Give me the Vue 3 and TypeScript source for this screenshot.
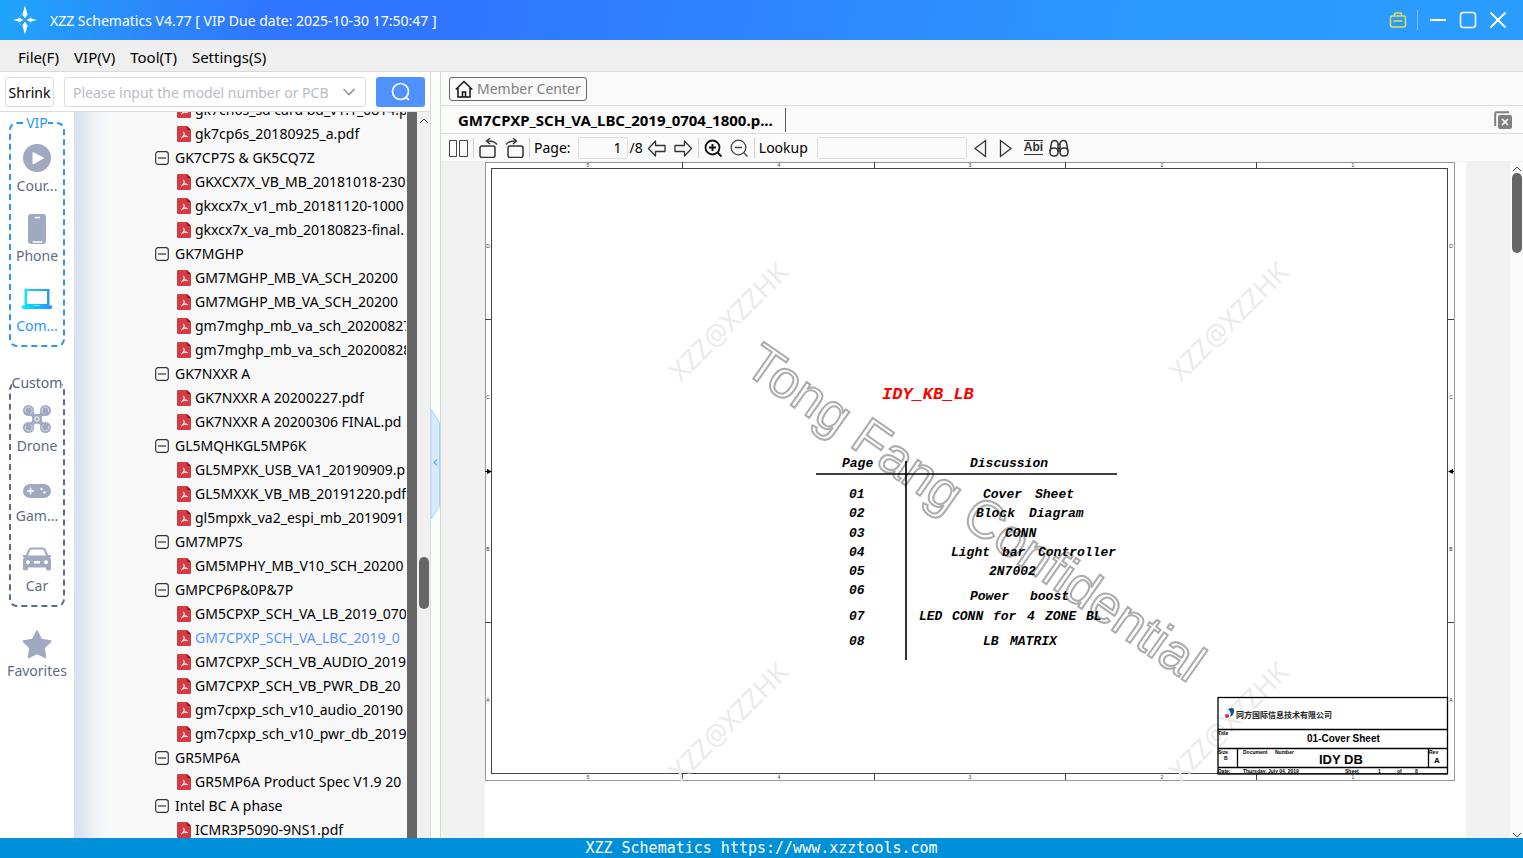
<script setup lang="ts">
import { ref } from 'vue'

interface NavItem {
  label: string
  icon: string
  active?: boolean
}

interface TreeRow {
  name: string
  group?: boolean
  active?: boolean
}

interface Word {
  x: number
  y: number
  text: string
}

const menus = ['File(F)', 'VIP(V)', 'Tool(T)', 'Settings(S)']

const vipItems: NavItem[] = [
  { label: 'Cour...', icon: 'play' },
  { label: 'Phone', icon: 'phone' },
  { label: 'Com...', icon: 'laptop', active: true },
]

const customItems: NavItem[] = [
  { label: 'Drone', icon: 'drone' },
  { label: 'Gam...', icon: 'game' },
  { label: 'Car', icon: 'car' },
]

const sections = [
  { title: 'VIP', cls: 'vip', items: vipItems },
  { title: 'Custom', cls: 'custom', items: customItems },
]

const rows: TreeRow[] = [
  { name: 'gk7cn6s_sd card bd_v1.1_0814.p' },
  { name: 'gk7cp6s_20180925_a.pdf' },
  { name: 'GK7CP7S & GK5CQ7Z', group: true },
  { name: 'GKXCX7X_VB_MB_20181018-230' },
  { name: 'gkxcx7x_v1_mb_20181120-1000' },
  { name: 'gkxcx7x_va_mb_20180823-final.' },
  { name: 'GK7MGHP', group: true },
  { name: 'GM7MGHP_MB_VA_SCH_20200' },
  { name: 'GM7MGHP_MB_VA_SCH_20200' },
  { name: 'gm7mghp_mb_va_sch_20200827' },
  { name: 'gm7mghp_mb_va_sch_20200828' },
  { name: 'GK7NXXR A', group: true },
  { name: 'GK7NXXR A 20200227.pdf' },
  { name: 'GK7NXXR A 20200306 FINAL.pd' },
  { name: 'GL5MQHKGL5MP6K', group: true },
  { name: 'GL5MPXK_USB_VA1_20190909.p' },
  { name: 'GL5MXXK_VB_MB_20191220.pdf' },
  { name: 'gl5mpxk_va2_espi_mb_2019091' },
  { name: 'GM7MP7S', group: true },
  { name: 'GM5MPHY_MB_V10_SCH_20200' },
  { name: 'GMPCP6P&0P&7P', group: true },
  { name: 'GM5CPXP_SCH_VA_LB_2019_070' },
  { name: 'GM7CPXP_SCH_VA_LBC_2019_0', active: true },
  { name: 'GM7CPXP_SCH_VB_AUDIO_2019' },
  { name: 'GM7CPXP_SCH_VB_PWR_DB_20' },
  { name: 'gm7cpxp_sch_v10_audio_20190' },
  { name: 'gm7cpxp_sch_v10_pwr_db_2019' },
  { name: 'GR5MP6A', group: true },
  { name: 'GR5MP6A Product Spec V1.9 20' },
  { name: 'Intel BC A phase', group: true },
  { name: 'ICMR3P5090-9NS1.pdf' },
]

const words: Word[] = [
  { x: 357, y: 305, text: 'Page' },
  { x: 485, y: 305, text: 'Discussion' },
  { x: 364, y: 336, text: '01' },
  { x: 364, y: 355, text: '02' },
  { x: 364, y: 375, text: '03' },
  { x: 364, y: 394, text: '04' },
  { x: 364, y: 413, text: '05' },
  { x: 364, y: 432, text: '06' },
  { x: 364, y: 458, text: '07' },
  { x: 364, y: 483, text: '08' },
  { x: 498, y: 336, text: 'Cover' },
  { x: 550, y: 336, text: 'Sheet' },
  { x: 491, y: 355, text: 'Block' },
  { x: 544, y: 355, text: 'Diagram' },
  { x: 520, y: 375, text: 'CONN' },
  { x: 466, y: 394, text: 'Light' },
  { x: 517, y: 394, text: 'bar' },
  { x: 553, y: 394, text: 'Controller' },
  { x: 504, y: 413, text: '2N7002' },
  { x: 485, y: 438, text: 'Power' },
  { x: 545, y: 438, text: 'boost' },
  { x: 434, y: 458, text: 'LED' },
  { x: 467, y: 458, text: 'CONN' },
  { x: 508, y: 458, text: 'for' },
  { x: 542, y: 458, text: '4' },
  { x: 560, y: 458, text: 'ZONE' },
  { x: 601, y: 458, text: 'BL' },
  { x: 498, y: 483, text: 'LB' },
  { x: 525, y: 483, text: 'MATRIX' },
]

const marks = [
  { x: 196, y: 221 },
  { x: 696, y: 221 },
  { x: 196, y: 621 },
  { x: 696, y: 621 },
]

const columnTicks = [197, 389, 580, 771]
const columnLabels = [
  { x: 103, text: '5' },
  { x: 294, text: '4' },
  { x: 485, text: '3' },
  { x: 677, text: '2' },
  { x: 868, text: '1' },
]
const rowTicks = [157, 460]
const rowLabels = [
  { y: 86, text: 'D' },
  { y: 237, text: 'C' },
  { y: 389, text: 'B' },
  { y: 540, text: 'A' },
]

const keyword = ref('')
const lookup = ref('')
const page = ref('1')
</script>

<template>
  <div class="app">
    <header class="titlebar">
      <svg class="logo" viewBox="0 0 24 30" aria-hidden="true">
        <circle cx="12" cy="15" r="6.500" fill="none" stroke="#7cc6ff" stroke-width="1" stroke-dasharray="5 2" />
        <path d="M12 0.500l2.600 9L12 13.500l-2.600-4zM12 29.500l2.600-9L12 16.500l-2.600 4zM0 15l7-1.800 3.500 1.800L7 16.800zM24 15l-7-1.800-3.500 1.800 3.500 1.800z" fill="#fff" />
      </svg>
      <h1>XZZ Schematics V4.77 [ VIP Due date: 2025-10-30 17:50:47 ]</h1>
      <button class="win bag" type="button" aria-label="Toolbox">
        <svg viewBox="0 0 18 18"><path d="M5.500 4.500V3.500q0-1.500 1.500-1.500h4q1.500 0 1.500 1.500v1M3 5h12q1.500 0 1.500 1.500V14q0 2-2 2h-11q-2 0-2-2V6.500Q1.500 5 3 5zM5 10h8" fill="none" stroke="#e3e04a" stroke-width="1.500" stroke-linecap="round" /></svg>
      </button>
      <span class="win-sep"></span>
      <button class="win" type="button" aria-label="Minimize">
        <svg viewBox="0 0 18 18"><path d="M1 9h16" stroke="#fff" stroke-width="2" /></svg>
      </button>
      <button class="win" type="button" aria-label="Maximize">
        <svg viewBox="0 0 18 18"><rect x="1.500" y="1.500" width="15" height="15" rx="3" fill="none" stroke="#fff" stroke-width="1.500" /></svg>
      </button>
      <button class="win" type="button" aria-label="Close">
        <svg viewBox="0 0 18 18"><path d="M1.500 1.500l15 15M16.500 1.500l-15 15" stroke="#fff" stroke-width="1.800" /></svg>
      </button>
    </header>

    <nav class="menubar">
      <button v-for="m in menus" :key="m" type="button">{{ m }}</button>
    </nav>

    <main class="body">
      <section class="left">
        <form class="search" @submit.prevent>
          <button class="shrink" type="button">Shrink</button>
          <div class="combo">
            <input v-model="keyword" type="text" aria-label="Model number" placeholder="Please input the model number or PCB" />
            <svg viewBox="0 0 14 10" aria-hidden="true"><path d="M1.500 2l5.500 5.500L12.500 2" fill="none" stroke="#8f949c" stroke-width="1.600" /></svg>
          </div>
          <button class="go" type="submit" aria-label="Search">
            <svg viewBox="0 0 20 20"><circle cx="9.500" cy="9.500" r="8" fill="none" stroke="#fff" stroke-width="1.700" /><path d="M14.500 15l3.500 3" stroke="#fff" stroke-width="1.800" /></svg>
          </button>
        </form>

        <div class="lower">
          <nav class="rail">
            <div v-for="s in sections" :key="s.title" class="box" :class="s.cls">
              <span class="legend">{{ s.title }}</span>
              <button v-for="i in s.items" :key="i.label" type="button" class="item" :class="{ active: i.active }">
                <svg viewBox="0 0 36 36" aria-hidden="true">
                  <g v-if="i.icon === 'play'">
                    <circle cx="18" cy="18" r="14" fill="#a0a9bf" />
                    <path d="M14 12.500v11.500L24.500 18z" fill="#fff" stroke="#fff" stroke-linejoin="round" />
                  </g>
                  <g v-else-if="i.icon === 'phone'">
                    <rect x="9" y="4" width="18" height="30" rx="3" fill="#a0a9bf" />
                    <path d="M16 7.500h4.500M14 32h9" stroke="#fff" stroke-width="1.300" stroke-linecap="round" />
                  </g>
                  <g v-else-if="i.icon === 'laptop'">
                    <defs>
                      <linearGradient id="lap" x1="0" x2="1" y1="0" y2="0">
                        <stop offset="0" stop-color="#00f0ff" />
                        <stop offset="1" stop-color="#2a8cff" />
                      </linearGradient>
                    </defs>
                    <path d="M5.500 9h25v16.500h-25zM8 11v13h20V11zM3 25.500h11q4 1 8 0h11v2q0 1.500-2 1.500H5q-2 0-2-1.500z" fill="url(#lap)" />
                  </g>
                  <g v-else-if="i.icon === 'drone'">
                    <path d="M9 10l18 18M27 10L9 28" stroke="#a0a9bf" stroke-width="4" />
                    <g fill="#a0a9bf"><circle cx="9.500" cy="10.500" r="5.500" /><circle cx="26.500" cy="10.500" r="5.500" /><circle cx="9.500" cy="27.500" r="5.500" /><circle cx="26.500" cy="27.500" r="5.500" /><circle cx="18" cy="19" r="5" /></g>
                    <g fill="none" stroke="#e5e8ee" stroke-width="0.800"><path d="M6.500 12a3.500 3.500 0 1 1 5 1.500M29.500 12a3.500 3.500 0 1 0-5 1.500M6.500 26a3.500 3.500 0 1 0 5-1.500M29.500 26a3.500 3.500 0 1 1-5-1.500" /></g>
                    <circle cx="18" cy="19" r="2.200" fill="none" stroke="#fff" />
                  </g>
                  <g v-else-if="i.icon === 'game'">
                    <rect x="4" y="14" width="28" height="14" rx="7" fill="#a0a9bf" />
                    <path d="M8 21h7M11.500 17.500v7" stroke="#fff" stroke-width="1.500" />
                    <circle cx="22.500" cy="19" r="1.200" fill="#fff" /><circle cx="25.500" cy="22.500" r="1.200" fill="#fff" />
                  </g>
                  <g v-else>
                    <path transform="translate(0 2)" d="M4 13h3L9 8q1-2.500 3-2.500h12q2 0 3 2.500l2 5h3v2h-1.500q1.500 1 1.500 3v9q0 1.500-2.500 1.500T27 27v-1.500H9V27q0 1.500-2.500 1.500T4 27v-9q0-2 1.500-3H4zM9 13.500h18l-2.200-5q-.4-1-1.300-1h-11q-.9 0-1.300 1zM9 18.300a2 2 0 1 0 .1 0zM27 18.300a2 2 0 1 0 .1 0zM15 19v2.500h6V19z" fill="#a0a9bf" fill-rule="evenodd" />
                  </g>
                </svg>
                <span>{{ i.label }}</span>
              </button>
            </div>
            <button type="button" class="item favorites">
              <svg viewBox="0 0 36 36" aria-hidden="true"><path d="M18 6.500l4.200 8.300 9.300 1.500-6.700 6.600 1.400 9.300L18 28l-8.200 4.200 1.400-9.300-6.700-6.600 9.300-1.500z" fill="#a0a9bf" stroke="#a0a9bf" stroke-width="2" stroke-linejoin="round" /></svg>
              <span>Favorites</span>
            </button>
          </nav>

          <div class="tree">
            <ul>
              <li v-for="(r, n) in rows" :key="n" :class="{ group: r.group, active: r.active }">
                <svg v-if="r.group" viewBox="0 0 14 14" aria-hidden="true"><rect x="0.700" y="0.700" width="12.600" height="12.600" rx="2.500" fill="#fbfbfb" stroke="#333" stroke-width="1.200" /><path d="M3 7h8" stroke="#333" stroke-width="1.200" /></svg>
                <svg v-else class="pdf" viewBox="0 0 14 16" aria-hidden="true">
                  <path d="M1 0h9l4 4v11q0 1-1 1H1q-1 0-1-1V1q0-1 1-1z" fill="#d63a42" />
                  <path d="M10 0l4 4h-4z" fill="#8f1820" />
                  <path d="M6.500 6q1.200 0 .6 2.300-.8 2.400-2.800 3.800M7 8.800q1.300 2 3.500 1.800M6 10.800q1.500-.7 3.500-.7" fill="none" stroke="#fff" stroke-width="1" stroke-linecap="round" />
                </svg>
                <span>{{ r.name }}</span>
              </li>
            </ul>
          </div>
          <div class="edge"></div>
          <div class="scroll">
            <svg viewBox="0 0 10 6" aria-hidden="true"><path d="M1 5l4-4 4 4" fill="none" stroke="#444" /></svg>
            <i class="thumb tree-thumb"></i>
          </div>
        </div>
      </section>

      <div class="splitter">
        <button type="button" aria-label="Collapse panel">
          <svg viewBox="0 0 9 112"><path d="M0 .5l8.500 13v84L0 110z" fill="#d6ebff" stroke="#a3d0fb" /><path d="M6 50.500L3 53.500l3 3" fill="none" stroke="#5db0f5" stroke-width="1.200" /></svg>
        </button>
      </div>

      <section class="right">
        <div class="member-row">
          <button class="member" type="button">
            <svg viewBox="0 0 18 18" aria-hidden="true"><path d="M.8 9.500L9 1.500l8.200 8M3 8v9h12V8M7.500 17v-5h3v5" fill="none" stroke="#111" stroke-width="1.500" /></svg>
            Member Center
          </button>
        </div>
        <div class="tabs">
          <button class="tab" type="button">GM7CPXP_SCH_VA_LBC_2019_0704_1800.p...</button>
          <button class="close-all" type="button" aria-label="Close all">
            <svg viewBox="0 0 18 18"><path d="M1.200 15V2.500q0-1.300 1.300-1.300H15" fill="none" stroke="#808080" stroke-width="2" /><rect x="4" y="4" width="14" height="14" rx="2" fill="#808080" /><path d="M8 8l6 6M14 8l-6 6" stroke="#fff" stroke-width="1.700" /></svg>
          </button>
        </div>
        <div class="toolbar">
          <button type="button" aria-label="Two pages"><svg viewBox="0 0 20 20"><path d="M1.500 2.500h7v16h-7zM11.500 2.500h8v16h-8z" fill="none" stroke="#444" /></svg></button>
          <i class="sep"></i>
          <button type="button" aria-label="Rotate left"><svg viewBox="0 0 20 20"><rect x="2" y="8" width="15" height="11.500" rx="2" fill="none" stroke="#333" stroke-width="1.500" /><path d="M19 6.500Q16 2.500 9 3M12 .3L8.500 3l3.500 3" fill="none" stroke="#333" stroke-width="1.400" /></svg></button>
          <button class="rot" type="button" aria-label="Rotate right"><svg viewBox="0 0 20 20"><rect x="4" y="8" width="15" height="11.500" rx="2" fill="none" stroke="#333" stroke-width="1.500" /><path d="M2 6.500Q5 2.500 12 3M9 .3L12.500 3 9 6" fill="none" stroke="#333" stroke-width="1.400" /></svg></button>
          <i class="sep"></i>
          <label class="page-label" for="page">Page:</label>
          <input id="page" v-model="page" class="page-input" type="text" />
          <span class="total">/8</span>
          <button type="button" aria-label="Previous page"><svg viewBox="0 0 20 20"><path d="M1.500 10.500l7-7.500v4.500H18v6H8.500V18z" fill="none" stroke="#333" stroke-width="1.300" stroke-linejoin="round" /></svg></button>
          <button class="next" type="button" aria-label="Next page"><svg viewBox="0 0 20 20"><path d="M18.500 10.500l-7-7.500v4.500H2v6h9.500V18z" fill="none" stroke="#333" stroke-width="1.300" stroke-linejoin="round" /></svg></button>
          <i class="sep"></i>
          <button type="button" aria-label="Zoom in"><svg viewBox="0 0 20 20"><circle cx="9.500" cy="9.500" r="7" fill="none" stroke="#111" stroke-width="1.800" /><path d="M14.500 14.500l4 4M6 9.500h7M9.500 6v7" stroke="#111" stroke-width="1.900" /></svg></button>
          <button class="rot" type="button" aria-label="Zoom out"><svg viewBox="0 0 20 20"><circle cx="9.500" cy="9.500" r="7.300" fill="none" stroke="#444" stroke-width="1.300" /><path d="M14.500 14.500l4 4M6 9.500h7" stroke="#444" stroke-width="1.400" /></svg></button>
          <i class="sep"></i>
          <label class="page-label" for="lookup">Lookup</label>
          <input id="lookup" v-model="lookup" class="lookup-input" type="text" />
          <button class="find-prev" type="button" aria-label="Find previous"><svg viewBox="0 0 20 20"><path d="M15.500 2.500v16L5 10.500z" fill="none" stroke="#333" stroke-width="1.300" /></svg></button>
          <button class="find" type="button" aria-label="Find next"><svg viewBox="0 0 20 20"><path d="M4.500 2.500v16L15 10.500z" fill="none" stroke="#333" stroke-width="1.300" /></svg></button>
          <button class="abi" type="button">Abi</button>
          <button class="find" type="button" aria-label="Search document"><svg viewBox="0 0 20 20"><g fill="none" stroke="#333" stroke-width="1.500"><path d="M1 13.500L2.500 5Q3 2.500 5.500 2.500T9 5v9M19 13.500L17.500 5Q17 2.500 14.500 2.500T11 5v9M9 6.500h2M9 10.500h2" /><rect x="1" y="10" width="8" height="8" rx="3.500" /><rect x="11" y="10" width="8" height="8" rx="3.500" /></g></svg></button>
        </div>

        <div class="viewer">
          <div class="canvas">
            <svg class="sheet" viewBox="0 0 981 676" preserveAspectRatio="xMidYMin slice" role="img" aria-label="Cover sheet">
              <rect width="981" height="676" fill="#fff" />
              <rect x="0.500" y="0.500" width="969" height="618" fill="none" stroke="#999" />
              <rect x="6.500" y="6.500" width="956" height="605" fill="none" stroke="#444" />
              <g stroke="#444">
                <path v-for="x in columnTicks" :key="x" :d="`M${x + 0.5} 0v6M${x + 0.5} 612v6`" />
                <path v-for="y in rowTicks" :key="y" :d="`M0 ${y + 0.5}h6M963 ${y + 0.5}h6`" />
              </g>
              <path d="M0 309.500h3M969 309.500h-3" stroke="#000" />
              <path d="M2 307l5 2.500-5 2.500zM968 307l-5 2.500 5 2.500z" />
              <g class="ref">
                <template v-for="c in columnLabels" :key="c.text">
                  <text :x="c.x" y="5">{{ c.text }}</text>
                  <text :x="c.x" y="617">{{ c.text }}</text>
                </template>
                <template v-for="r in rowLabels" :key="r.text">
                  <text x="3" :y="r.y">{{ r.text }}</text>
                  <text x="966" :y="r.y">{{ r.text }}</text>
                </template>
              </g>

              <text class="stamp" transform="translate(257 209) rotate(35)">Tong Fang Confidential</text>

              <text class="heading" x="397" y="237">IDY_KB_LB</text>
              <g class="mono"><text v-for="(w, n) in words" :key="n" :x="w.x" :y="w.y">{{ w.text }}</text></g>
              <path d="M331 312h301M421 299v199" stroke="#000" stroke-width="1.600" />

              <g class="mark"><text v-for="m in marks" :key="`${m.x}-${m.y}`" :transform="`translate(${m.x} ${m.y}) rotate(-45)`">XZZ@XZZHK</text></g>

              <g fill="none" stroke="#000" stroke-width="1.300">
                <rect x="733" y="535.500" width="229.500" height="76.500" />
                <path d="M733 567.500h230M733 586.500h230M733 605.500h230M752.500 587v19M943.500 587v19" />
              </g>
              <path d="M743 547q7-3 6 3-1 4-4 5 2-5-2-8z" fill="#164a9c" />
              <circle cx="742" cy="554" r="2" fill="#e2243b" />
              <text class="cjk" x="751" y="556">同方国际信息技术有限公司</text>
              <g class="small">
                <text x="733" y="573">Title</text>
                <text x="733" y="592">Size</text>
                <text x="739" y="598">B</text>
                <text x="758" y="592">Document</text>
                <text x="790" y="592">Number</text>
                <text x="944" y="592">Rev</text>
                <text x="733" y="611">Date:</text>
                <text x="758" y="611">Thursday, July 04, 2019</text>
                <text x="860" y="611">Sheet</text>
                <text x="893" y="611">1</text>
                <text x="912" y="611">of</text>
                <text x="930" y="611">8</text>
              </g>
              <g class="block">
                <text x="822" y="580" font-size="10">01-Cover Sheet</text>
                <text x="834" y="602" font-size="13">IDY DB</text>
                <text x="949" y="601" font-size="8">A</text>
              </g>
            </svg>
          </div>
          <div class="scroll page-scroll">
            <svg viewBox="0 0 10 6" aria-hidden="true"><path d="M1 5l4-4 4 4" fill="none" stroke="#444" /></svg>
            <i class="thumb page-thumb"></i>
            <svg class="down" viewBox="0 0 10 6" aria-hidden="true"><path d="M1 1l4 4 4-4" fill="none" stroke="#444" /></svg>
          </div>
        </div>
      </section>
    </main>

    <footer class="status">XZZ Schematics https://www.xzztools.com</footer>
  </div>
</template>

<style>
html,
body {
  margin: 0;
  overflow: hidden;
}
</style>

<style scoped>
.app {
  display: flex;
  flex-direction: column;
  height: 100vh;
  overflow: hidden;
  background: #fafafa;
  color: #000;
  font: 14px/20px "Noto Sans", "Open Sans", "Noto Sans CJK SC", sans-serif;
}

* {
  box-sizing: border-box;
}

button,
input {
  margin: 0;
  padding: 0;
  border: 0;
  background: none;
  color: inherit;
  font: inherit;
}

svg {
  display: block;
}

.titlebar {
  display: flex;
  flex: none;
  align-items: center;
  height: 40px;
  padding: 0 16px 0 13px;
  background: linear-gradient(100deg, #1fa5fb 0%, #2c88fb 10%, #3075ff 18%, #3076ff 30%, #2b98ff 75%, #2b9dff 100%);
  color: #fff;
}

.logo {
  width: 24px;
  height: 30px;
  margin-right: 13px;
}

h1 {
  flex: 1;
  margin: 0;
  padding-top: 2px;
  font-size: 14px;
  font-weight: 400;
  white-space: nowrap;
}

.win {
  width: 18px;
  height: 18px;
  margin-left: 12px;
}

.win-sep {
  width: 1px;
  height: 20px;
  margin: 0 -1px 0 10px;
  background: #7cc0ff;
}

.menubar {
  display: flex;
  flex: none;
  gap: 15px;
  height: 32px;
  padding: 2px 18px 0;
  border-bottom: 1px solid #d9d9d9;
  background: #efefef;
  font-size: 15px;
}

.body {
  display: flex;
  flex: 1;
  min-height: 0;
}

.left {
  display: flex;
  flex: none;
  flex-direction: column;
  width: 431px;
  border-right: 1px solid #d9d9d9;
  background: #fff;
}

.search {
  display: flex;
  flex: none;
  align-items: center;
  height: 40px;
  padding: 0 5px;
  border-bottom: 1px solid #dcdcdc;
}

.shrink {
  width: 49px;
  height: 30px;
  padding-top: 2px;
  border: 1px solid #dcdcdc;
  border-radius: 3px;
}

.combo {
  display: flex;
  flex: 1;
  align-items: center;
  height: 30px;
  margin: 0 10px;
  padding: 0 9px 0 8px;
  border: 1px solid #dcdcdc;
  border-radius: 3px;
}

.combo input {
  flex: 1;
  min-width: 0;
  padding-top: 2px;
  outline: none;
}

.combo input::placeholder {
  color: #b9bcc3;
  opacity: 1;
}

.combo svg {
  width: 14px;
  height: 10px;
}

.go {
  display: grid;
  place-items: center;
  width: 49px;
  height: 30px;
  border-radius: 3px;
  background: #4f92ff;
}

.go svg {
  width: 20px;
  height: 20px;
}

.lower {
  display: flex;
  flex: 1;
  min-height: 0;
}

.rail {
  display: flex;
  flex: none;
  flex-direction: column;
  align-items: center;
  width: 74px;
  padding-top: 10px;
}

.box {
  display: flex;
  position: relative;
  flex-direction: column;
  align-items: center;
  gap: 14px;
  width: 56px;
  margin-bottom: 35px;
  padding: 16px 0 9px;
  border: 2px dashed #5d6c86;
  border-radius: 8px;
}

.box.vip {
  border-color: #2d95f3;
}

.box.custom {
  margin-bottom: 18px;
}

.legend {
  position: absolute;
  top: -11px;
  background: #fff;
  color: #56627a;
}

.vip .legend {
  color: #2d95f3;
}

.item {
  display: flex;
  flex: none;
  flex-direction: column;
  align-items: center;
  color: #5f6b80;
}

.item svg {
  width: 36px;
  height: 36px;
}

.item.active {
  color: #2d95f3;
}

.tree {
  flex: 1;
  min-width: 0;
  overflow: hidden;
  padding-right: 1px;
  background: linear-gradient(90deg, #d5e0f1 0, #e4e9f2 12px, #f1f3f6 22px, #f8f8f8 34px);
}

.tree ul {
  margin: -14px 0 0;
  padding: 0 0 0 103px;
  list-style: none;
}

.tree li {
  display: flex;
  align-items: center;
  gap: 4px;
  height: 24px;
  overflow: hidden;
  white-space: nowrap;
}

.tree li.group {
  gap: 6px;
  margin-left: -22px;
}

.tree li.active {
  color: #5b93ff;
}

.tree li svg {
  flex: none;
  width: 14px;
  height: 14px;
}

.tree li .pdf {
  height: 16px;
}

.edge {
  flex: none;
  width: 10px;
  background: #666;
}

.scroll {
  display: flex;
  flex: none;
  flex-direction: column;
  align-items: center;
  width: 13px;
  padding-top: 6px;
  background: #f0f0f0;
}

.scroll svg {
  flex: none;
  width: 10px;
  height: 6px;
}

.thumb {
  flex: none;
  width: 10px;
  border-radius: 5px;
  background: #666;
}

.tree-thumb {
  height: 52px;
  margin-top: 433px;
}

.splitter {
  position: relative;
  flex: none;
  width: 10px;
  border-right: 1px solid #d9d9d9;
  background: #fbfffa;
}

.splitter button {
  position: absolute;
  top: 44%;
  left: 0;
  width: 9px;
  height: 112px;
}

.right {
  display: flex;
  flex: 1;
  flex-direction: column;
  min-width: 0;
}

.member-row {
  display: flex;
  flex: none;
  align-items: center;
  height: 34px;
  padding: 0 8px;
  border-bottom: 1px solid #dcdcdc;
}

.member {
  display: flex;
  align-items: center;
  gap: 4px;
  height: 24px;
  padding: 0 5px;
  border: 1px solid #666;
  border-radius: 3px;
  color: #808080;
}

.member svg {
  width: 18px;
  height: 18px;
}

.tabs {
  display: flex;
  flex: none;
  align-items: center;
  justify-content: space-between;
  height: 28px;
  padding: 0 11px 0 17px;
  border-bottom: 1px solid #dcdcdc;
}

.tab {
  height: 24px;
  padding-right: 12px;
  border-right: 1px solid #555;
  font-size: 15px;
  font-weight: 700;
}

.close-all,
.close-all svg {
  width: 18px;
  height: 18px;
}

.toolbar {
  display: flex;
  flex: none;
  align-items: center;
  height: 27px;
  padding-left: 7px;
}

.toolbar button svg {
  width: 20px;
  height: 20px;
}

.sep {
  width: 1px;
  height: 20px;
  margin: 0 4px 0 5px;
  background: #d0d0d0;
}

.toolbar .rot {
  margin-left: 6px;
}

.page-label {
  margin-right: 7px;
}

.page-input,
.lookup-input {
  height: 22px;
  border: 1px solid #e0e0e0;
  border-radius: 2px;
}

.page-input {
  width: 50px;
  padding-right: 5px;
  text-align: right;
}

.total {
  margin: 0 4px 0 2px;
}

.toolbar .next {
  margin-left: 6px;
}

.lookup-input {
  width: 150px;
  margin-left: 2px;
}

.toolbar .find-prev {
  margin-left: 3px;
}

.toolbar .find {
  margin-left: 6px;
}

.abi {
  margin-left: 8px;
  border-top: 1px solid #333;
  border-bottom: 1px solid #333;
  color: #333;
  font: 700 12px/13px "Liberation Sans", Arial, sans-serif;
}

.viewer {
  display: flex;
  flex: 1;
  min-height: 0;
  border-top: 1px solid #f1f1f1;
}

.canvas {
  flex: 1;
  min-width: 0;
  overflow: hidden;
  padding: 0 44px;
  background: #f1f1f1;
}

.sheet {
  width: 100%;
  min-height: 100%;
}

.page-scroll {
  padding-top: 4px;
  background: #fafafa;
}

.page-thumb {
  height: 80px;
  margin-top: 1px;
}

.page-scroll .down {
  margin-top: auto;
}

.ref {
  fill: #333;
  font: 5px "Liberation Sans", Arial, sans-serif;
  text-anchor: middle;
}

.stamp {
  fill: none;
  stroke: #acacac;
  stroke-width: 2px;
  font: 53px "Liberation Sans", Arial, sans-serif;
}

.heading {
  fill: #f00;
  font: italic 700 17px "Liberation Mono", "Courier New", monospace;
}

.mono {
  font: italic 700 13px "Liberation Mono", "Courier New", monospace;
}

.mark {
  fill: #ebebeb;
  font: 27px "Noto Sans", "Open Sans", sans-serif;
}

.cjk {
  fill: #222;
  font: 700 8px "Noto Sans CJK SC", sans-serif;
}

.small {
  font: 700 5px "Liberation Sans", Arial, sans-serif;
}

.block {
  font-family: "Liberation Sans", Arial, sans-serif;
  font-weight: 700;
}

.status {
  flex: none;
  height: 20px;
  background: #0090d9;
  color: #fff;
  font: 15px/20px "DejaVu Sans Mono", "Liberation Mono", monospace;
  text-align: center;
}
</style>
